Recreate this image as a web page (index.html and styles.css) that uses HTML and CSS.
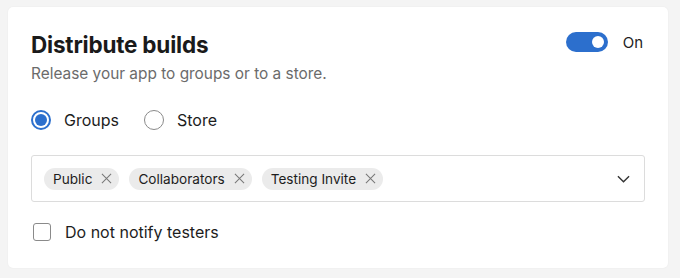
FILE: index.html
```html
<!DOCTYPE html>
<html>
<head>
<meta charset="utf-8">
<link rel="stylesheet" href="styles.css">
</head>
<body>
<div class="card">
  <div class="header">
    <div class="titles">
      <h1 class="title">Distribute builds</h1>
      <p class="subtitle">Release your app to groups or to a store.</p>
    </div>
    <div class="toggle-wrap">
      <span class="toggle"><span class="knob"></span></span>
      <span class="toggle-label">On</span>
    </div>
  </div>
  <div class="radios">
    <label class="radio-item"><span class="radio checked"></span><span>Groups</span></label>
    <label class="radio-item"><span class="radio"></span><span>Store</span></label>
  </div>
  <div class="select">
    <div class="chips">
      <span class="chip">Public <svg class="x" viewBox="0 0 12 12"><path d="M1 1l10 10M11 1L1 11"/></svg></span>
      <span class="chip">Collaborators <svg class="x" viewBox="0 0 12 12"><path d="M1 1l10 10M11 1L1 11"/></svg></span>
      <span class="chip">Testing Invite <svg class="x" viewBox="0 0 12 12"><path d="M1 1l10 10M11 1L1 11"/></svg></span>
    </div>
    <svg class="chevron" viewBox="0 0 14 8"><path d="M1 1l6 6 6-6"/></svg>
  </div>
  <label class="check-item"><span class="checkbox"></span><span>Do not notify testers</span></label>
</div>
</body>
</html>
```
FILE: styles.css
```css
html, body { margin: 0; padding: 0; }
body {
  background: #f4f4f4;
  font-family: Inter, "Noto Sans", sans-serif;
  color: #1d1d1d;
  width: 680px;
  height: 278px;
  padding: 7px 12px 10px 8px;
  box-sizing: border-box;
}
.card {
  background: #fff;
  border-radius: 5px;
  box-shadow: 0 0 2px rgba(0,0,0,0.06);
  height: 261px;
  box-sizing: border-box;
  padding: 24px 23px 0 23px;
}
.header { display: flex; justify-content: space-between; align-items: flex-start; }
.title { margin: 0; font-size: 22.5px; font-weight: 700; line-height: 28px; letter-spacing: -0.2px; color: #1a1a1a; }
.subtitle { margin: 5px 0 0; font-size: 15.4px; line-height: 20px; color: #6b6b6b; }
.toggle-wrap { display: flex; align-items: center; gap: 15px; margin-top: 1px; margin-right: 2px; }
.toggle { width: 42px; height: 20px; border-radius: 10px; background: #2c6fcd; position: relative; display: block; }
.knob { position: absolute; right: 4px; top: 4px; width: 12px; height: 12px; border-radius: 50%; background: #fff; }
.toggle-label { font-size: 15px; color: #1d1d1d; }
.radios { display: flex; gap: 25px; margin-top: 24px; }
.radio-item { display: flex; align-items: center; gap: 13px; font-size: 16px; line-height: 24px; }
.radio { width: 20px; height: 20px; box-sizing: border-box; border: 1.5px solid #8a8a8a; border-radius: 50%; display: block; position: relative; }
.radio.checked { border: 2px solid #2c6fcd; }
.radio.checked::after { content: ""; position: absolute; left: 2px; top: 2px; width: 12px; height: 12px; border-radius: 50%; background: #2c6fcd; }
.select {
  margin-top: 23px;
  height: 47px;
  box-sizing: border-box;
  border: 1px solid #dcdcdc;
  border-radius: 3px;
  display: flex;
  align-items: center;
  justify-content: space-between;
  padding: 0 14px 0 12px;
}
.chips { display: flex; gap: 10px; }
.chip {
  display: flex; align-items: center; gap: 9px;
  height: 22px; border-radius: 11px;
  background: #ebebeb;
  padding: 0 7px 0 9px;
  font-size: 13.6px; color: #1d1d1d;
}
.x { width: 11px; height: 11px; fill: none; stroke: #777; stroke-width: 1.1; }
.chevron { width: 13px; height: 8px; fill: none; stroke: #333; stroke-width: 1.5; }
.check-item { display: flex; align-items: center; gap: 14px; margin-top: 18px; margin-left: 2px; font-size: 16px; line-height: 24px; }
.checkbox { width: 18px; height: 18px; box-sizing: border-box; border: 1.5px solid #8a8a8a; border-radius: 3px; display: block; }
```
